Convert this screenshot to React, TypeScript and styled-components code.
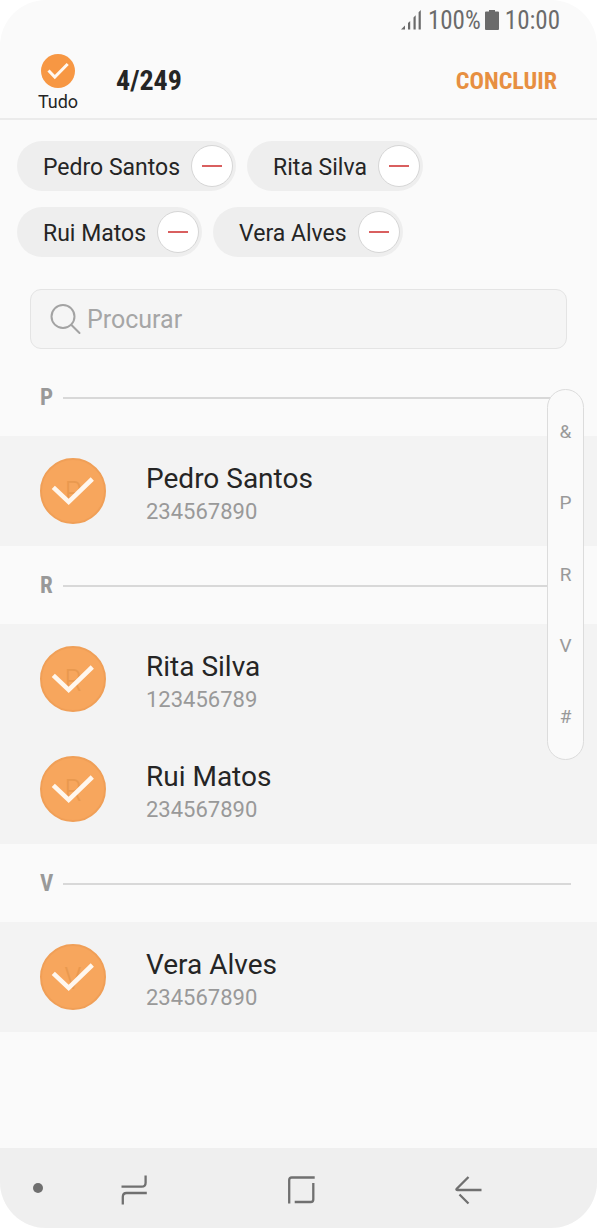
import React, { useState } from 'react';
import styled, { createGlobalStyle } from 'styled-components';

const GlobalStyle = createGlobalStyle`
  * { box-sizing: border-box; }
  body {
    margin: 0;
    background: #fff;
    font-family: Roboto, sans-serif;
    color: #252525;
  }
  button { border: 0; padding: 0; background: none; font: inherit; color: inherit; cursor: pointer; }
`;

const condensed = `font-family: 'Roboto Condensed', Roboto, sans-serif;`;

const Screen = styled.div`
  display: flex;
  flex-direction: column;
  min-height: 100vh;
  border-radius: 46px;
  overflow: hidden;
  background: #fafafa;
`;

const StatusBar = styled.div`
  ${condensed}
  display: flex;
  justify-content: flex-end;
  align-items: center;
  height: 40px;
  padding: 0 37px;
  gap: 6px;
  font-size: 25px;
  line-height: 40px;
  color: #6b6b6b;
`;

const StatusText = styled.span`
  padding-top: 2px;
`;

const BatteryLevel = styled.span`
  display: flex;
  align-items: center;
  gap: 4px;
`;

const Header = styled.header`
  display: flex;
  align-items: center;
  height: 80px;
  padding: 4px 40px 0 37px;
  border-bottom: 2px solid #ebebeb;
`;

const SelectAll = styled.label`
  position: relative;
  display: flex;
  flex-direction: column;
  align-items: center;
  width: 42px;
  padding-top: 8px;
  font-size: 18px;
  line-height: 28px;
  cursor: pointer;
  svg { display: block; }
`;

const HiddenCheckbox = styled.input`
  position: absolute;
  inset: 0;
  width: 100%;
  height: 100%;
  margin: 0;
  opacity: 0;
  cursor: pointer;
`;

const Counter = styled.h1`
  ${condensed}
  flex: 1;
  margin: 0 0 0 37px;
  font-size: 28px;
  line-height: 36px;
  font-weight: 700;
`;

const DoneButton = styled.button`
  && {
    ${condensed}
    font-size: 24px;
    line-height: 36px;
    font-weight: 700;
    color: #e78f41;
  }
`;

const Chips = styled.div`
  display: flex;
  flex-wrap: wrap;
  gap: 16px 11px;
  padding: 21px 17px 0;
`;

const Chip = styled.div`
  display: flex;
  align-items: center;
  gap: 11px;
  height: 50px;
  padding: 0 3px 0 26px;
  border-radius: 25px;
  background: #eee;
  font-size: 23px;
  line-height: 30px;
`;

const ChipName = styled.span`
  padding-top: 3px;
`;

const RemoveButton = styled.button`
  && {
    display: grid;
    place-items: center;
    width: 42px;
    height: 42px;
    border: 1px solid #d6d6d6;
    border-radius: 50%;
    background: #fff;
  }
`;

const Minus = styled.span`
  width: 20px;
  height: 2px;
  background: #d95f5f;
`;

const SearchBox = styled.label`
  display: flex;
  align-items: center;
  gap: 6px;
  height: 60px;
  margin: 32px 30px 9px;
  padding: 0 19px;
  border: 1px solid #e4e4e4;
  border-radius: 11px;
  background: #f5f5f5;
`;

const SearchInput = styled.input`
  flex: 1;
  min-width: 0;
  border: 0;
  padding: 2px 0 0;
  outline: 0;
  background: transparent;
  font: 25px/32px Roboto, sans-serif;
  color: #252525;
  &::placeholder { color: #a6a6a6; opacity: 1; }
`;

const ListArea = styled.main`
  position: relative;
  flex: 1;
`;

const SectionTitle = styled.h2`
  ${condensed}
  display: flex;
  align-items: center;
  gap: 10px;
  height: 78px;
  margin: 0;
  padding: 2px 26px 0 40px;
  font-size: 23px;
  line-height: 30px;
  font-weight: 700;
  color: #999;
  &::after {
    content: '';
    flex: 1;
    height: 2px;
    background: #d8d8d8;
  }
`;

const Row = styled.label`
  position: relative;
  display: flex;
  align-items: center;
  gap: 40px;
  height: 110px;
  padding: 0 40px;
  background: #f3f3f3;
  cursor: pointer;
`;

const Avatar = styled.span`
  position: relative;
  display: grid;
  place-items: center;
  width: 66px;
  height: 66px;
  padding-top: 2px;
  border: 2px solid #f09f57;
  border-radius: 50%;
  background: #f7a65d;
  ${condensed}
  font-size: 32px;
  line-height: 34px;
  font-weight: 300;
  color: #e9994f;
`;

const AvatarCheck = styled.svg`
  position: absolute;
  inset: -2px;
`;

const Details = styled.span`
  display: flex;
  flex-direction: column;
  padding-top: 8px;
`;

const Name = styled.span`
  font-size: 28px;
  line-height: 34px;
`;

const Phone = styled.span`
  font-size: 22px;
  line-height: 32px;
  color: #999;
`;

const IndexBar = styled.nav`
  position: absolute;
  top: 31px;
  right: 13px;
  display: flex;
  flex-direction: column;
  width: 37px;
  height: 371px;
  padding: 6px 0;
  border: 1px solid #dcdcdc;
  border-radius: 19px;
  background: #fafafa;
`;

const IndexLink = styled.a`
  flex: 1;
  display: grid;
  place-items: center;
  font-size: 19px;
  line-height: 24px;
  color: #999;
  text-decoration: none;
`;

const NavBar = styled.footer`
  display: flex;
  height: 80px;
  padding-right: 45px;
  background: #efefef;
`;

const NavButton = styled.button`
  && {
    flex: 1;
    display: grid;
    place-items: center;
    padding-top: 4px;
  }
`;

const DotButton = styled.button`
  && {
    width: 50px;
    padding-left: 25px;
    display: grid;
    place-items: center;
  }
`;

const Dot = styled.span`
  width: 10px;
  height: 10px;
  border-radius: 50%;
  background: #6f6f6f;
`;

const SignalIcon = () => (
  <svg width="21" height="20" viewBox="0 0 21 20" fill="#6b6b6b" aria-hidden="true">
    <path d="M0 19.5 4 15.5V19.5ZM7 19.5V13L9.2 11V19.5ZM12.5 19.5V7.5L14.7 5.2V19.5ZM17.6 19.5V2.2L19.8 0V19.5Z" />
  </svg>
);

const BatteryIcon = () => (
  <svg width="14" height="20" viewBox="0 0 14 20" fill="#6b6b6b" aria-hidden="true">
    <path d="M4 0h6v1.5h3q1 0 1 1V19q0 1-1 1H1q-1 0-1-1V2.5q0-1 1-1h3Z" />
  </svg>
);

const SearchIcon = () => (
  <svg width="31" height="32" viewBox="0 0 31 32" fill="none" stroke="#a3a3a3" strokeWidth="2" aria-hidden="true">
    <circle cx="13" cy="13.5" r="11.5" />
    <path d="M21.2 21.7 29.5 30" strokeLinecap="round" />
  </svg>
);

const navStroke = { fill: 'none', stroke: '#707070', strokeWidth: 2.3, 'aria-hidden': true } as const;

const RecentsIcon = () => (
  <svg width="30" height="30" viewBox="0 0 30 30" {...navStroke}>
    <path d="M2.5 11.7H22.5Q26.6 11.7 26.6 7.7V.5M27.8 18H7.5Q3.8 18 3.8 22V29.5" />
  </svg>
);

const HomeIcon = () => (
  <svg width="30" height="30" viewBox="0 0 30 30" {...navStroke}>
    <path d="M3.2 28.5V5Q3.2 2.5 5.7 2.5H28.7M27.3 8V24.5Q27.3 27 24.8 27H8.7" />
  </svg>
);

const BackIcon = () => (
  <svg width="30" height="30" viewBox="0 0 30 30" {...navStroke} strokeLinejoin="round">
    <path d="M15.5 2 3.5 14Q3 15 4.5 15H28.5M6.5 19.5 15.5 28.5" />
  </svg>
);

type Contact = { name: string; phone: string };

const contacts: Contact[] = [
  { name: 'Pedro Santos', phone: '234567890' },
  { name: 'Rita Silva', phone: '123456789' },
  { name: 'Rui Matos', phone: '234567890' },
  { name: 'Vera Alves', phone: '234567890' },
];

const sections = ['P', 'R', 'V'];
const indexLetters = ['&', 'P', 'R', 'V', '#'];

export default function App() {
  const [selected, setSelected] = useState<string[]>(contacts.map((c) => c.name));
  const toggle = (name: string) =>
    setSelected((now) => (now.includes(name) ? now.filter((n) => n !== name) : [...now, name]));
  const allSelected = selected.length === contacts.length;

  return (
    <>
      <GlobalStyle />
      <Screen>
        <StatusBar>
          <SignalIcon />
          <BatteryLevel>
            <StatusText>100%</StatusText>
            <BatteryIcon />
          </BatteryLevel>
          <StatusText>10:00</StatusText>
        </StatusBar>

        <Header>
          <SelectAll>
            <HiddenCheckbox
              type="checkbox"
              checked={allSelected}
              onChange={() => setSelected(allSelected ? [] : contacts.map((c) => c.name))}
            />
            <svg width="34" height="34" viewBox="0 0 34 34" fill="none" aria-hidden="true">
              <circle cx="17" cy="17" r="17" fill={allSelected ? '#f79743' : '#ccc'} />
              <path d="M7.5 16.5 13.8 23 26.7 10" stroke="#fff8f0" strokeWidth="3" />
            </svg>
            Tudo
          </SelectAll>
          <Counter>{selected.length}/249</Counter>
          <DoneButton type="button">CONCLUIR</DoneButton>
        </Header>

        <Chips>
          {contacts
            .filter((c) => selected.includes(c.name))
            .map((c) => (
              <Chip key={c.name}>
                <ChipName>{c.name}</ChipName>
                <RemoveButton type="button" aria-label={`Remover ${c.name}`} onClick={() => toggle(c.name)}>
                  <Minus />
                </RemoveButton>
              </Chip>
            ))}
        </Chips>

        <SearchBox>
          <SearchIcon />
          <SearchInput type="text" placeholder="Procurar" aria-label="Procurar" />
        </SearchBox>

        <ListArea>
          {sections.map((letter) => (
            <section key={letter} id={`sec-${letter}`}>
              <SectionTitle>{letter}</SectionTitle>
              {contacts
                .filter((c) => c.name.startsWith(letter))
                .map((c) => (
                  <Row key={c.name}>
                    <HiddenCheckbox
                      type="checkbox"
                      checked={selected.includes(c.name)}
                      onChange={() => toggle(c.name)}
                    />
                    <Avatar>
                      {letter}
                      {selected.includes(c.name) && (
                        <AvatarCheck width="66" height="66" viewBox="0 0 66 66" fill="none" aria-hidden="true">
                          <path d="M13.3 29.3 28.7 43.8 52.3 21" stroke="#fffaf5" strokeWidth="4.6" strokeOpacity=".96" />
                        </AvatarCheck>
                      )}
                    </Avatar>
                    <Details>
                      <Name>{c.name}</Name>
                      <Phone>{c.phone}</Phone>
                    </Details>
                  </Row>
                ))}
            </section>
          ))}
          <IndexBar aria-label="Índice">
            {indexLetters.map((letter) => (
              <IndexLink key={letter} href={`#sec-${letter}`}>
                {letter}
              </IndexLink>
            ))}
          </IndexBar>
        </ListArea>

        <NavBar>
          <DotButton type="button" aria-label="Ocultar barra">
            <Dot />
          </DotButton>
          <NavButton type="button" aria-label="Recentes">
            <RecentsIcon />
          </NavButton>
          <NavButton type="button" aria-label="Início">
            <HomeIcon />
          </NavButton>
          <NavButton type="button" aria-label="Voltar">
            <BackIcon />
          </NavButton>
        </NavBar>
      </Screen>
    </>
  );
}
